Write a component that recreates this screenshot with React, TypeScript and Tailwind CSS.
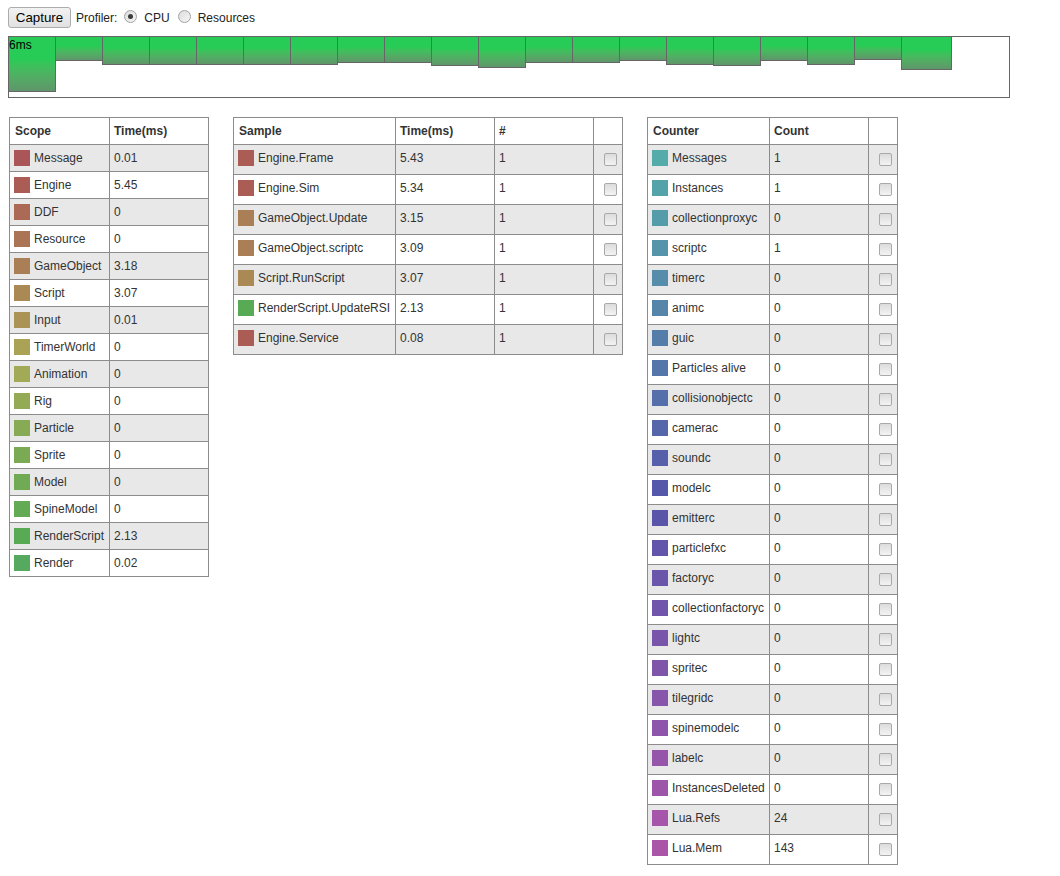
import clsx from "clsx";

type Row = { name: string; value: string; color: string };

const SCOPES: Row[] = [
  { name: "Message", value: "0.01", color: "bg-[#aa5558]" },
  { name: "Engine", value: "5.45", color: "bg-[#aa5c55]" },
  { name: "DDF", value: "0", color: "bg-[#aa6a55]" },
  { name: "Resource", value: "0", color: "bg-[#aa7455]" },
  { name: "GameObject", value: "3.18", color: "bg-[#aa7f55]" },
  { name: "Script", value: "3.07", color: "bg-[#aa8955]" },
  { name: "Input", value: "0.01", color: "bg-[#aa9355]" },
  { name: "TimerWorld", value: "0", color: "bg-[#aaa255]" },
  { name: "Animation", value: "0", color: "bg-[#a3aa55]" },
  { name: "Rig", value: "0", color: "bg-[#95aa55]" },
  { name: "Particle", value: "0", color: "bg-[#87aa55]" },
  { name: "Sprite", value: "0", color: "bg-[#7baa55]" },
  { name: "Model", value: "0", color: "bg-[#71aa55]" },
  { name: "SpineModel", value: "0", color: "bg-[#63aa55]" },
  { name: "RenderScript", value: "2.13", color: "bg-[#58aa55]" },
  { name: "Render", value: "0.02", color: "bg-[#55aa60]" },
];

const SAMPLES = [
  { name: "Engine.Frame", time: "5.43", count: "1", color: "bg-[#aa5c55]" },
  { name: "Engine.Sim", time: "5.34", count: "1", color: "bg-[#aa5c55]" },
  { name: "GameObject.Update", time: "3.15", count: "1", color: "bg-[#aa7f55]" },
  { name: "GameObject.scriptc", time: "3.09", count: "1", color: "bg-[#aa7f55]" },
  { name: "Script.RunScript", time: "3.07", count: "1", color: "bg-[#aa8955]" },
  { name: "RenderScript.UpdateRSI", time: "2.13", count: "1", color: "bg-[#58aa55]" },
  { name: "Engine.Service", time: "0.08", count: "1", color: "bg-[#aa5c55]" },
];

const COUNTERS: Row[] = [
  { name: "Messages", value: "1", color: "bg-[#55aaaa]" },
  { name: "Instances", value: "1", color: "bg-[#55a3aa]" },
  { name: "collectionproxyc", value: "0", color: "bg-[#559caa]" },
  { name: "scriptc", value: "1", color: "bg-[#5594aa]" },
  { name: "timerc", value: "0", color: "bg-[#558daa]" },
  { name: "animc", value: "0", color: "bg-[#5586aa]" },
  { name: "guic", value: "0", color: "bg-[#557daa]" },
  { name: "Particles alive", value: "0", color: "bg-[#5576aa]" },
  { name: "collisionobjectc", value: "0", color: "bg-[#556faa]" },
  { name: "camerac", value: "0", color: "bg-[#5566aa]" },
  { name: "soundc", value: "0", color: "bg-[#555faa]" },
  { name: "modelc", value: "0", color: "bg-[#5558aa]" },
  { name: "emitterc", value: "0", color: "bg-[#5b55aa]" },
  { name: "particlefxc", value: "0", color: "bg-[#6255aa]" },
  { name: "factoryc", value: "0", color: "bg-[#6955aa]" },
  { name: "collectionfactoryc", value: "0", color: "bg-[#7155aa]" },
  { name: "lightc", value: "0", color: "bg-[#7855aa]" },
  { name: "spritec", value: "0", color: "bg-[#7f55aa]" },
  { name: "tilegridc", value: "0", color: "bg-[#8755aa]" },
  { name: "spinemodelc", value: "0", color: "bg-[#8e55aa]" },
  { name: "labelc", value: "0", color: "bg-[#9555aa]" },
  { name: "InstancesDeleted", value: "0", color: "bg-[#9d55aa]" },
  { name: "Lua.Refs", value: "24", color: "bg-[#a555aa]" },
  { name: "Lua.Mem", value: "143", color: "bg-[#aa55a7]" },
];

// frame bars: height in px incl. borders
const FRAMES = [
  56, 25, 29, 29, 29, 29, 29, 27, 27, 30, 32, 27, 27, 25, 29, 30, 25, 29, 24, 34,
];

const cell = "flex items-center border-r border-b border-[#8c8c8c] pl-[4px] whitespace-nowrap";
// rows that hold a checkbox: text sits a little above the middle
const tall = "pb-1";

function Swatch({ color }: { color: string }) {
  return <span className={clsx("h-4 w-4 shrink-0", color)} />;
}

function Checkbox() {
  return (
    <span className="h-[13px] w-[13px] rounded-[2px] border border-[#a9a9a9] bg-linear-to-b from-[#dcdcdc] to-[#f3f3f3]" />
  );
}

function Radio({ checked }: { checked?: boolean }) {
  return (
    <span className="-mt-[3px] flex h-[13px] w-[13px] items-center justify-center rounded-full border border-[#a3a3a3] bg-linear-to-br from-[#dcdcdc] to-[#f6f6f6]">
      {checked ? <span className="h-[5px] w-[5px] rounded-full bg-[#3c3c3c]" /> : null}
    </span>
  );
}

function rowBg(i: number) {
  return i % 2 === 0 ? "bg-[#e8e8e8]" : "bg-white";
}

function FrameGraph() {
  return (
    <div className="relative mt-2 h-[62px] w-[1002px] border border-[#666]">
      <div className="-mt-px -ml-px flex items-start">
        {FRAMES.map((h, i) => (
          <div
            key={i}
            className="-mr-px border border-[#666] bg-linear-to-b from-[#26cc55] from-40% to-[#5f966a]"
            style={{ height: h, width: i === FRAMES.length - 1 ? 51 : 48 }}
          />
        ))}
      </div>
      <span className="absolute top-[2px] left-0 text-[12px] leading-none text-black">6ms</span>
    </div>
  );
}

function ScopeTable() {
  return (
    <div className="w-[200px] border-t border-l border-[#8c8c8c]">
      <div className="flex h-[27px] bg-white font-bold">
        <div className={clsx(cell, "w-[100px] pl-[5px]")}>Scope</div>
        <div className={clsx(cell, "w-[99px]")}>Time(ms)</div>
      </div>
      {SCOPES.map((s, i) => (
        <div key={s.name} className={clsx("flex h-[27px]", rowBg(i))}>
          <div className={clsx(cell, "w-[100px] gap-1")}>
            <Swatch color={s.color} />
            {s.name}
          </div>
          <div className={clsx(cell, "w-[99px]")}>{s.value}</div>
        </div>
      ))}
    </div>
  );
}

function SampleTable() {
  return (
    <div className="w-[390px] border-t border-l border-[#8c8c8c]">
      <div className="flex h-[27px] bg-white font-bold">
        <div className={clsx(cell, "w-[162px] pl-[5px]")}>Sample</div>
        <div className={clsx(cell, "w-[99px]")}>Time(ms)</div>
        <div className={clsx(cell, "w-[99px]")}>#</div>
        <div className={clsx(cell, "w-[29px]")} />
      </div>
      {SAMPLES.map((s, i) => (
        <div key={s.name} className={clsx("flex h-[30px]", rowBg(i))}>
          <div className={clsx(cell, tall, "w-[162px] gap-1")}>
            <Swatch color={s.color} />
            {s.name}
          </div>
          <div className={clsx(cell, tall, "w-[99px]")}>{s.time}</div>
          <div className={clsx(cell, tall, "w-[99px]")}>{s.count}</div>
          <div className={clsx(cell, "w-[29px] justify-center pl-0")}>
            <Checkbox />
          </div>
        </div>
      ))}
    </div>
  );
}

function CounterTable() {
  return (
    <div className="w-[251px] border-t border-l border-[#8c8c8c]">
      <div className="flex h-[27px] bg-white font-bold">
        <div className={clsx(cell, "w-[122px] pl-[5px]")}>Counter</div>
        <div className={clsx(cell, "w-[99px]")}>Count</div>
        <div className={clsx(cell, "w-[29px]")} />
      </div>
      {COUNTERS.map((c, i) => (
        <div key={c.name} className={clsx("flex h-[30px]", rowBg(i))}>
          <div className={clsx(cell, tall, "w-[122px] gap-1")}>
            <Swatch color={c.color} />
            {c.name}
          </div>
          <div className={clsx(cell, tall, "w-[99px]")}>{c.value}</div>
          <div className={clsx(cell, "w-[29px] justify-center pl-0")}>
            <Checkbox />
          </div>
        </div>
      ))}
    </div>
  );
}

export default function App() {
  return (
    <div className="min-h-[876px] bg-white pt-[7px] pl-2 font-['Liberation_Sans',Arial,sans-serif] text-[12px] text-[#333]">
      <div className="flex h-[21px] items-center text-[#222]">
        <button
          type="button"
          className="h-[21px] w-[63px] rounded-[3px] border border-[#acacac] bg-linear-to-b from-[#f2f2f2] to-[#e1e1e1] text-[13.33px] text-black"
        >
          Capture
        </button>
        <span className="ml-[5px]">Profiler:</span>
        <span className="ml-[7px]">
          <Radio checked />
        </span>
        <span className="ml-[7px]">CPU</span>
        <span className="ml-[8px]">
          <Radio />
        </span>
        <span className="ml-[7px]">Resources</span>
      </div>

      <FrameGraph />

      <div className="mt-[19px] ml-px flex items-start gap-6">
        <ScopeTable />
        <SampleTable />
        <CounterTable />
      </div>
    </div>
  );
}
